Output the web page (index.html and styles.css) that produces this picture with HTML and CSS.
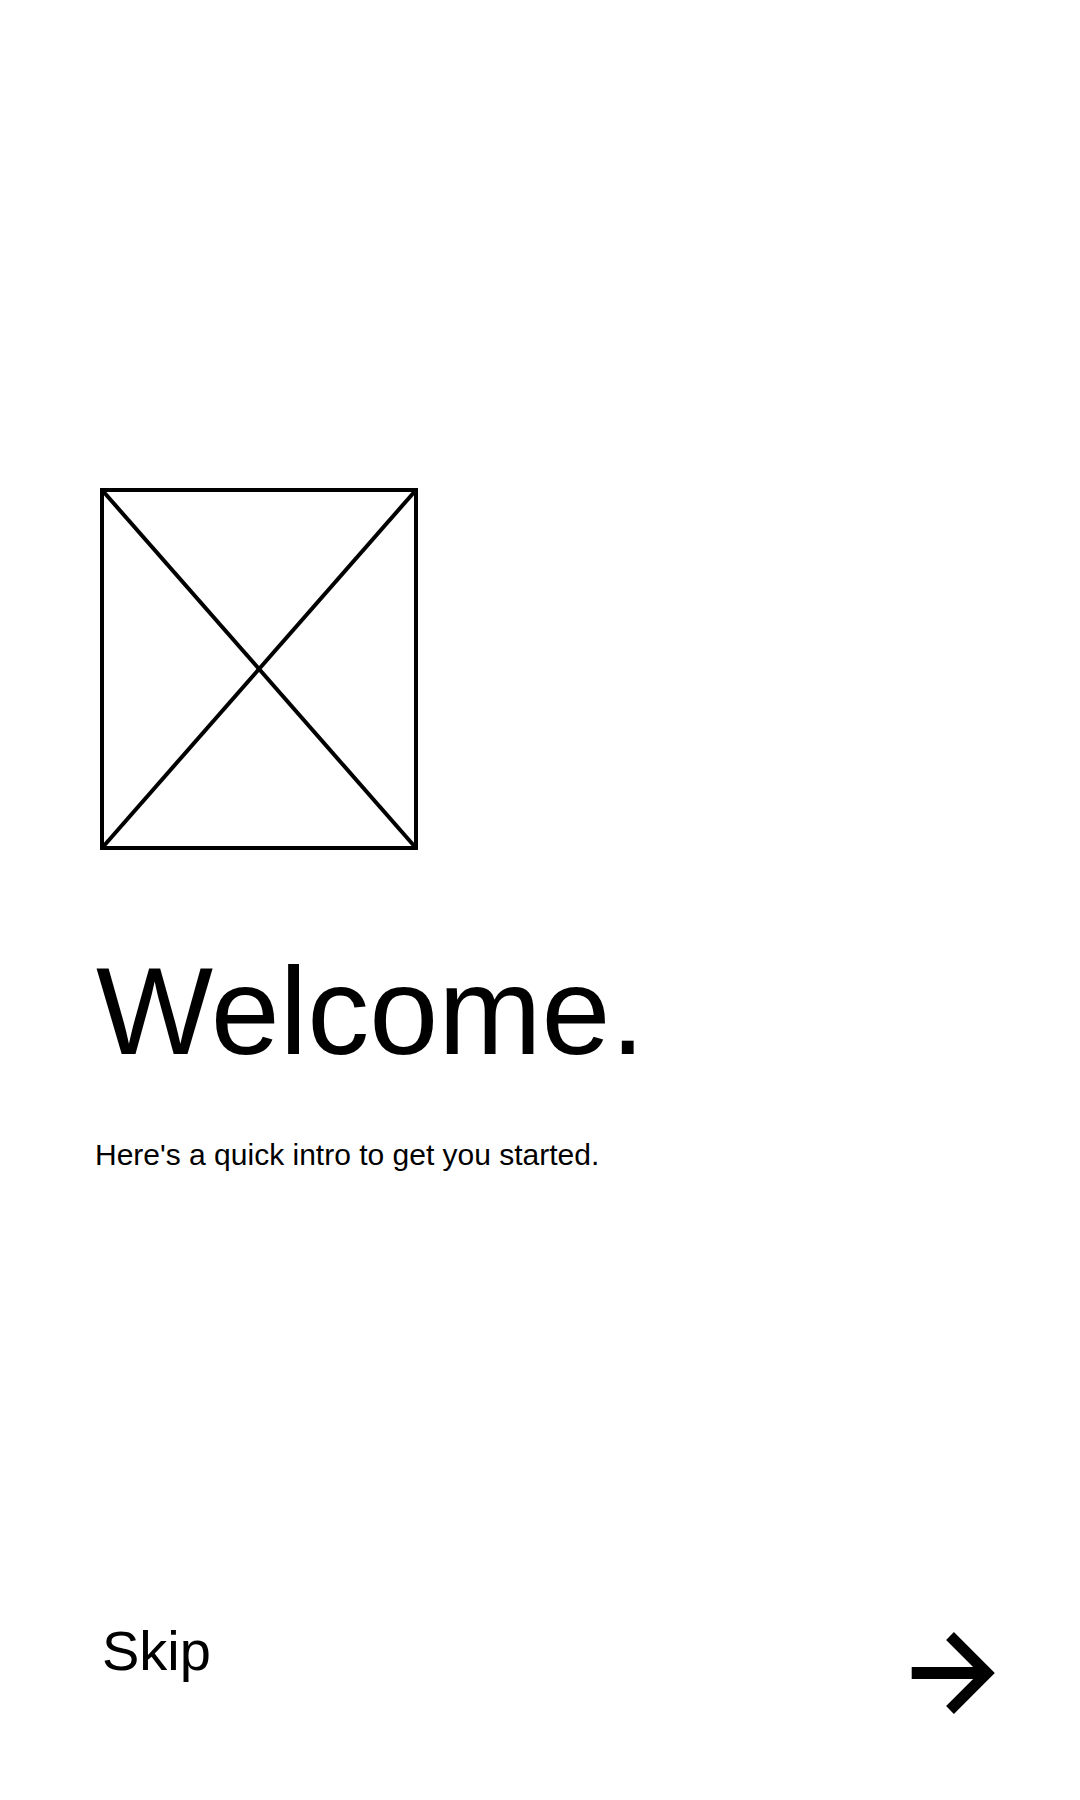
FILE: index.html
```html
<!DOCTYPE html>
<html lang="en">
<head>
<meta charset="utf-8">
<title>Welcome</title>
<link rel="stylesheet" href="styles.css">
</head>
<body>
<main class="screen">
  <section class="intro">
    <svg class="placeholder" width="320" height="364" viewBox="0 0 320 364" aria-hidden="true">
      <rect x="2" y="2" width="314" height="358" fill="none" stroke="#000" stroke-width="4"/>
      <line x1="2" y1="2" x2="316" y2="360" stroke="#000" stroke-width="4"/>
      <line x1="316" y1="2" x2="2" y2="360" stroke="#000" stroke-width="4"/>
    </svg>
    <h1 class="title">Welcome.</h1>
    <p class="subtitle">Here's a quick intro to get you started.</p>
  </section>
  <footer class="footer">
    <span class="skip">Skip</span>
    <svg class="next" width="100" height="95" viewBox="0 0 100 95" aria-hidden="true">
      <path d="M6.7 48 H84" fill="none" stroke="#000" stroke-width="12"/>
      <path d="M45 11 L82 48 L45 85" fill="none" stroke="#000" stroke-width="11" stroke-linejoin="miter"/>
    </svg>
  </footer>
</main>
</body>
</html>
```

FILE: styles.css
```css
html, body {
  margin: 0;
  padding: 0;
  background: #fff;
}

body {
  font-family: "Liberation Sans", Arial, sans-serif;
  color: #000;
}

.screen {
  width: 1080px;
  height: 1800px;
  display: flex;
  flex-direction: column;
}

.intro {
  display: flex;
  flex-direction: column;
  align-items: flex-start;
  padding-top: 488px;
}

.placeholder {
  display: block;
  margin-left: 100px;
}

.title {
  margin: 97px 0 0 96px;
  font-size: 124px;
  font-weight: 400;
  line-height: 1;
}

.subtitle {
  margin: 67px 0 0 95px;
  font-size: 30px;
  line-height: 1;
}

.footer {
  margin-top: auto;
  padding: 0 0 80px 102px;
  display: flex;
  justify-content: space-between;
  align-items: flex-start;
}

.skip {
  font-size: 56px;
  line-height: 1;
}

.next {
  display: block;
  margin-top: 2px;
  margin-right: 75px;
}
```
